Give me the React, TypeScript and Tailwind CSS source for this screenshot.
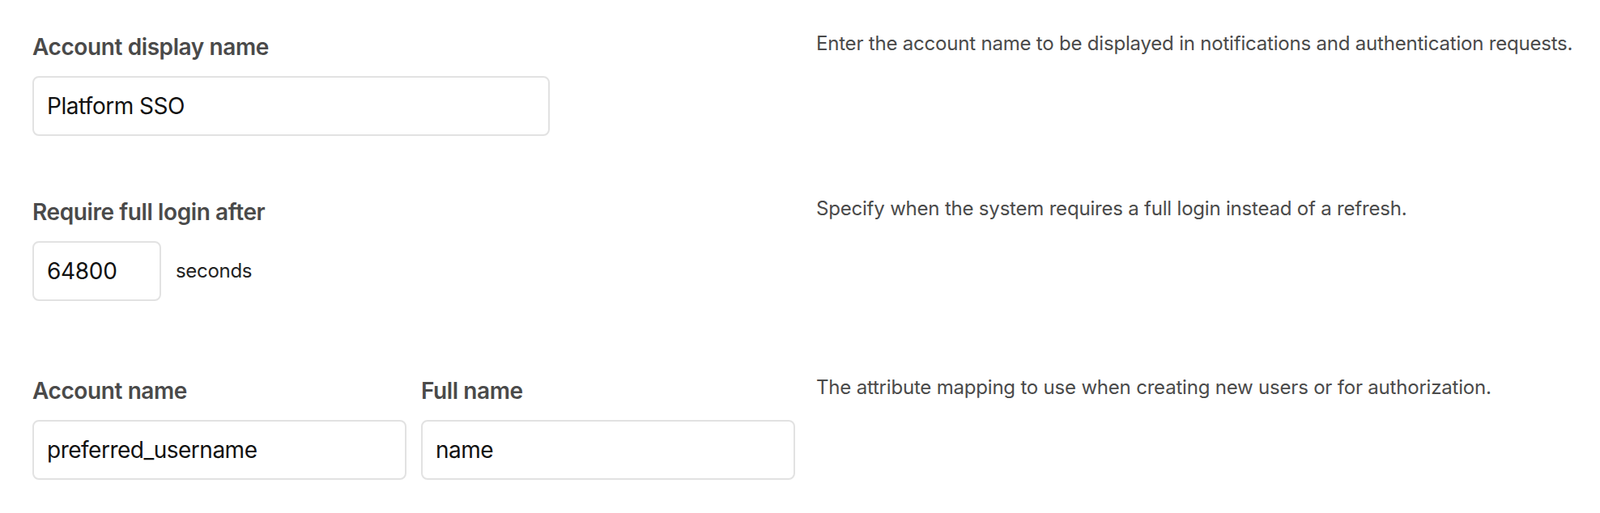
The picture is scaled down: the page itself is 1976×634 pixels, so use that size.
import React from 'react';

const font = { fontFamily: 'Inter, "Liberation Sans", sans-serif' };

type FieldProps = {
  label: string;
  value: string;
  className?: string;
};

const Field: React.FC<FieldProps> = ({ label, value, className }) => (
  <div className={className}>
    <label className="block text-[28px] leading-[36px] font-semibold tracking-[-0.4px] text-[#4a4a4a]">
      {label}
    </label>
    <input
      readOnly
      value={value}
      className="mt-[18px] block w-full h-[74px] rounded-[8px] border-2 border-[#e2e2e2] bg-white px-[16px] text-[28px] tracking-[-0.5px] text-[#111] outline-none"
      style={font}
    />
  </div>
);

const Row: React.FC<{ description: string; children: React.ReactNode; className?: string }> = ({
  description,
  children,
  className,
}) => (
  <div className={`flex items-start ${className ?? ''}`}>
    <div className="w-[942px] shrink-0">{children}</div>
    <p className="ml-[26px] -mt-[2px] text-[24px] leading-[32px] tracking-[-0.2px] text-[#4a4a4a]">
      {description}
    </p>
  </div>
);

export default function App() {
  return (
    <div className="min-h-[634px] bg-white pl-[40px] pt-[40px]" style={font}>
      <Row description="Enter the account name to be displayed in notifications and authentication requests.">
        <Field label="Account display name" value="Platform SSO" className="w-[639px]" />
      </Row>

      <Row className="mt-[76px]" description="Specify when the system requires a full login instead of a refresh.">
        <label className="block text-[28px] leading-[36px] font-semibold tracking-[-0.4px] text-[#4a4a4a]">
          Require full login after
        </label>
        <div className="mt-[18px] flex items-center">
          <input
            readOnly
            value="64800"
            className="block w-[159px] h-[74px] rounded-[8px] border-2 border-[#e2e2e2] bg-white px-[16px] text-[28px] tracking-[-0.3px] text-[#111] outline-none"
            style={font}
          />
          <span className="ml-[18px] text-[24px] tracking-[-0.3px] text-[#222]">seconds</span>
        </div>
      </Row>

      <Row className="mt-[93px]" description="The attribute mapping to use when creating new users or for authorization.">
        <div className="grid grid-cols-2 gap-[18px]">
          <Field label="Account name" value="preferred_username" />
          <Field label="Full name" value="name" />
        </div>
      </Row>
    </div>
  );
}
